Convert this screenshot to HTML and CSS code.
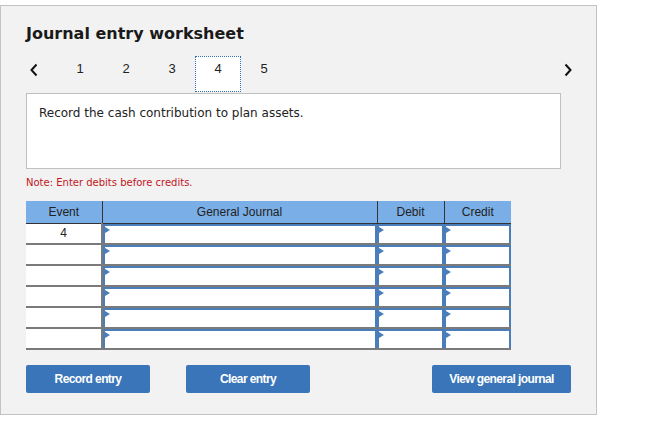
FILE: index.html
```html
<!DOCTYPE html>
<html lang="en">
  <head>
    <meta charset="UTF-8" />
    <title>Journal entry worksheet</title>
    <link rel="stylesheet" href="styles.css">
  </head>
  <body>
    <div class="panel">
      <h1>Journal entry worksheet</h1>

      <div class="nav">
        <span class="arrow prev">
          <svg width="10" height="14" viewBox="0 0 10 14"><polyline points="7.5,1.5 2.5,7 7.5,12.5" fill="none" stroke="#111" stroke-width="2"/></svg>
        </span>
        <span class="step">1</span>
        <span class="step">2</span>
        <span class="step">3</span>
        <span class="step active">4</span>
        <span class="step">5</span>
        <span class="arrow next">
          <svg width="10" height="14" viewBox="0 0 10 14"><polyline points="2.5,1.5 7.5,7 2.5,12.5" fill="none" stroke="#111" stroke-width="2"/></svg>
        </span>
      </div>

      <div class="task">Record the cash contribution to plan assets.</div>

      <p class="note">Note: Enter debits before credits.</p>

      <table class="journal">
        <thead>
          <tr>
            <th class="col-event">Event</th>
            <th class="col-journal">General Journal</th>
            <th class="col-amt">Debit</th>
            <th class="col-amt">Credit</th>
          </tr>
        </thead>
        <tbody>
          <tr>
            <td class="event">4</td>
            <td class="cell"><div class="field"></div></td>
            <td class="cell"><div class="field"></div></td>
            <td class="cell"><div class="field"></div></td>
          </tr>
          <tr>
            <td class="event"></td>
            <td class="cell"><div class="field"></div></td>
            <td class="cell"><div class="field"></div></td>
            <td class="cell"><div class="field"></div></td>
          </tr>
          <tr>
            <td class="event"></td>
            <td class="cell"><div class="field"></div></td>
            <td class="cell"><div class="field"></div></td>
            <td class="cell"><div class="field"></div></td>
          </tr>
          <tr>
            <td class="event"></td>
            <td class="cell"><div class="field"></div></td>
            <td class="cell"><div class="field"></div></td>
            <td class="cell"><div class="field"></div></td>
          </tr>
          <tr>
            <td class="event"></td>
            <td class="cell"><div class="field"></div></td>
            <td class="cell"><div class="field"></div></td>
            <td class="cell"><div class="field"></div></td>
          </tr>
          <tr>
            <td class="event"></td>
            <td class="cell"><div class="field"></div></td>
            <td class="cell"><div class="field"></div></td>
            <td class="cell"><div class="field"></div></td>
          </tr>
        </tbody>
      </table>

      <div class="actions">
        <button class="record">Record entry</button>
        <button class="clear">Clear entry</button>
        <button class="view">View general journal</button>
      </div>
    </div>
  </body>
</html>
```

FILE: styles.css
```css
* {
  box-sizing: border-box;
  margin: 0;
  padding: 0;
}

body {
  font-family: "DejaVu Sans", Verdana, sans-serif;
  background: #fff;
  color: #222;
}

.panel {
  margin-top: 5px;
  width: 597px;
  height: 410px;
  border: 1px solid #c3c3c3;
  background: #f2f2f2;
  padding: 18px 35px 0 25px;
}

h1 {
  font-size: 16px;
  font-weight: bold;
  line-height: 20px;
  color: #1a1a1a;
  margin-bottom: 12px;
}

.nav {
  display: flex;
  align-items: flex-start;
  height: 37px;
  margin-right: -12px;
  font-family: "Liberation Sans", Arial, sans-serif;
  font-size: 13px;
  color: #222;
}

.arrow {
  display: flex;
  align-items: center;
  padding-top: 7px;
}

.prev {
  width: 31px;
  padding-left: 3px;
}

.next {
  margin-left: auto;
}

.step {
  width: 46px;
  height: 37px;
  display: flex;
  justify-content: center;
  padding-top: 5px;
}

.step.active {
  height: 36px;
  background: #fff;
  border: 1px dotted #2f6db5;
  padding-top: 4px;
}

.task {
  height: 76px;
  background: #fff;
  border: 1px solid #c0c0c0;
  padding: 11px 12px 10px;
  font-size: 12px;
  line-height: 17px;
  color: #222;
}

.note {
  margin-top: 8px;
  font-size: 10px;
  line-height: 12px;
  color: #c4161c;
}

.journal {
  margin-top: 12px;
  width: 485px;
  border-collapse: collapse;
  table-layout: fixed;
  font-family: "Liberation Sans", Arial, sans-serif;
  font-size: 12px;
}

.journal th {
  background: #7aaee6;
  color: #222;
  font-weight: normal;
  height: 22px;
  border-right: 1px solid #333;
  border-bottom: 1px solid #333;
}

.journal th:last-child {
  border-right: none;
}

.col-event {
  width: 76px;
}

.col-journal {
  width: 275px;
}

.col-amt {
  width: 67px;
}

.journal td {
  height: 21px;
  padding: 0;
  background: #fff;
  border-bottom: 2px solid #7a7a7a;
}

.event {
  text-align: center;
  color: #222;
  border-right: 2px solid #7a7a7a;
}

.cell {
  background: #fff;
}

.field {
  position: relative;
  height: 19px;
  border: 2px solid #4a7ebb;
  border-bottom: none;
  background: #fff;
}

.field::before {
  content: "";
  position: absolute;
  left: 0;
  top: 1px;
  border-left: 5px solid #4a7ebb;
  border-top: 3px solid transparent;
  border-bottom: 3px solid transparent;
}

.actions {
  display: flex;
  margin-top: 15px;
  margin-right: -10px;
}

button {
  height: 28px;
  background: #3a75b9;
  color: #fff;
  border: none;
  border-radius: 2px;
  font-family: "Liberation Sans", Arial, sans-serif;
  font-size: 12px;
  font-weight: bold;
  letter-spacing: -0.6px;
}

.record,
.clear {
  width: 124px;
}

.clear {
  margin-left: 36px;
}

.view {
  width: 139px;
  margin-left: auto;
}
```
